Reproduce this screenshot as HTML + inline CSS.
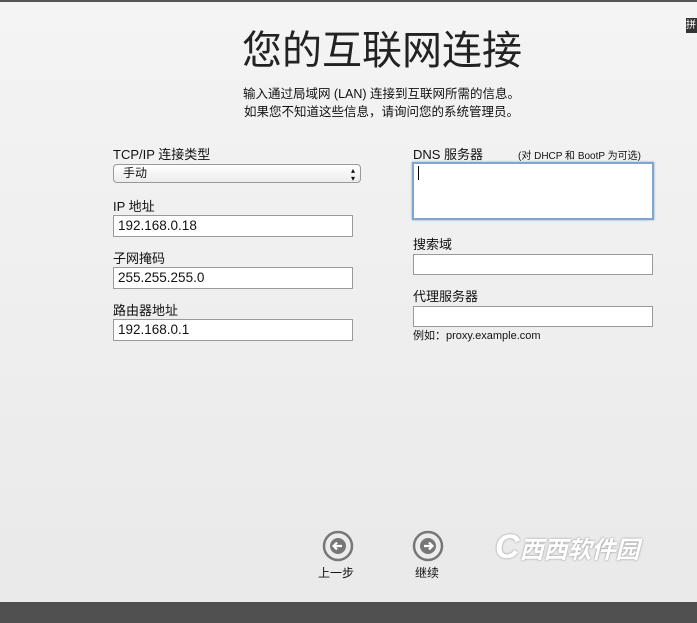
<!DOCTYPE html>
<html><head><meta charset="utf-8"><style>
body{margin:0;width:697px;height:623px;overflow:hidden;background:linear-gradient(#f4f4f4,#e9e9e9);font-family:"Liberation Sans","Noto Sans CJK SC",sans-serif;color:#111;position:relative}
.a{position:absolute}
.lbl{font-size:13px}
.in{position:absolute;background:#fff;border:1px solid #9a9a9a;box-sizing:border-box;font-size:13.5px;padding:2px 4px;line-height:16px}
</style></head><body>
<div class="a" style="top:0;left:0;width:697px;height:2px;background:#555"></div>
<div class="a" style="top:18px;left:686px;width:11px;height:15px;background:#333;color:#fff;font-size:10px;line-height:15px">拼</div>
<div class="a" style="top:26px;left:0;width:764px;text-align:center;font-size:40px;line-height:50px;color:#222">您的互联网连接</div>
<div class="a" style="top:85px;left:0;width:763px;text-align:center;font-size:12.5px;line-height:18px">输入通过局域网 (LAN) 连接到互联网所需的信息。<br>如果您不知道这些信息，请询问您的系统管理员。</div>
<div class="a lbl" style="top:144px;left:113px">TCP/IP 连接类型</div>
<div class="a" style="top:164px;left:113px;width:248px;height:19px;box-sizing:border-box;border:1px solid #999;border-radius:4px;background:linear-gradient(#fff,#ececec);font-size:12px;line-height:17px;padding-left:9px">手动<span style="position:absolute;right:5px;font-size:8px;line-height:8px;top:2px">▴<br>▾</span></div>
<div class="a lbl" style="top:196px;left:113px">IP 地址</div>
<div class="in" style="top:215px;left:113px;width:240px;height:22px">192.168.0.18</div>
<div class="a lbl" style="top:248px;left:113px">子网掩码</div>
<div class="in" style="top:267px;left:113px;width:240px;height:22px">255.255.255.0</div>
<div class="a lbl" style="top:300px;left:113px">路由器地址</div>
<div class="in" style="top:319px;left:113px;width:240px;height:22px">192.168.0.1</div>
<div class="a lbl" style="top:144px;left:413px">DNS 服务器</div>
<div class="a" style="top:147px;left:518px;font-size:10px">(对 DHCP 和 BootP 为可选)</div>
<div class="in" style="top:162px;left:412px;width:242px;height:58px;border:2px solid #7fa6d0;box-shadow:0 0 2px #8ab"><span style="display:inline-block;width:1px;height:14px;background:#000"></span></div>
<div class="a lbl" style="top:234px;left:413px">搜索域</div>
<div class="in" style="top:254px;left:413px;width:240px;height:21px"></div>
<div class="a lbl" style="top:286px;left:413px">代理服务器</div>
<div class="in" style="top:306px;left:413px;width:240px;height:21px"></div>
<div class="a" style="top:327px;left:413px;font-size:11px">例如：proxy.example.com</div>
<svg class="a" style="top:530px;left:322px" width="32" height="32"><circle cx="16" cy="16" r="14" fill="#ececec" stroke="#777" stroke-width="2.5"/><circle cx="16" cy="16" r="8" fill="#777"/><path d="M20 16H12M15 12.5L11.5 16L15 19.5" stroke="#fff" stroke-width="2.2" fill="none"/></svg>
<div class="a" style="top:564px;left:318px;font-size:12px">上一步</div>
<svg class="a" style="top:530px;left:412px" width="32" height="32"><circle cx="16" cy="16" r="14" fill="#ececec" stroke="#777" stroke-width="2.5"/><circle cx="16" cy="16" r="8" fill="#777"/><path d="M12 16H20M17 12.5L20.5 16L17 19.5" stroke="#fff" stroke-width="2.2" fill="none"/></svg>
<div class="a" style="top:564px;left:415px;font-size:12px">继续</div>
<div class="a" style="top:528px;left:495px;font-size:34px;color:#fff;font-style:italic;font-weight:bold;text-shadow:0 0 2px #888">C<span style="font-size:24px">西西软件园</span></div>
<div class="a" style="top:602px;left:0;width:697px;height:21px;background:#505050"></div>
</body></html>
